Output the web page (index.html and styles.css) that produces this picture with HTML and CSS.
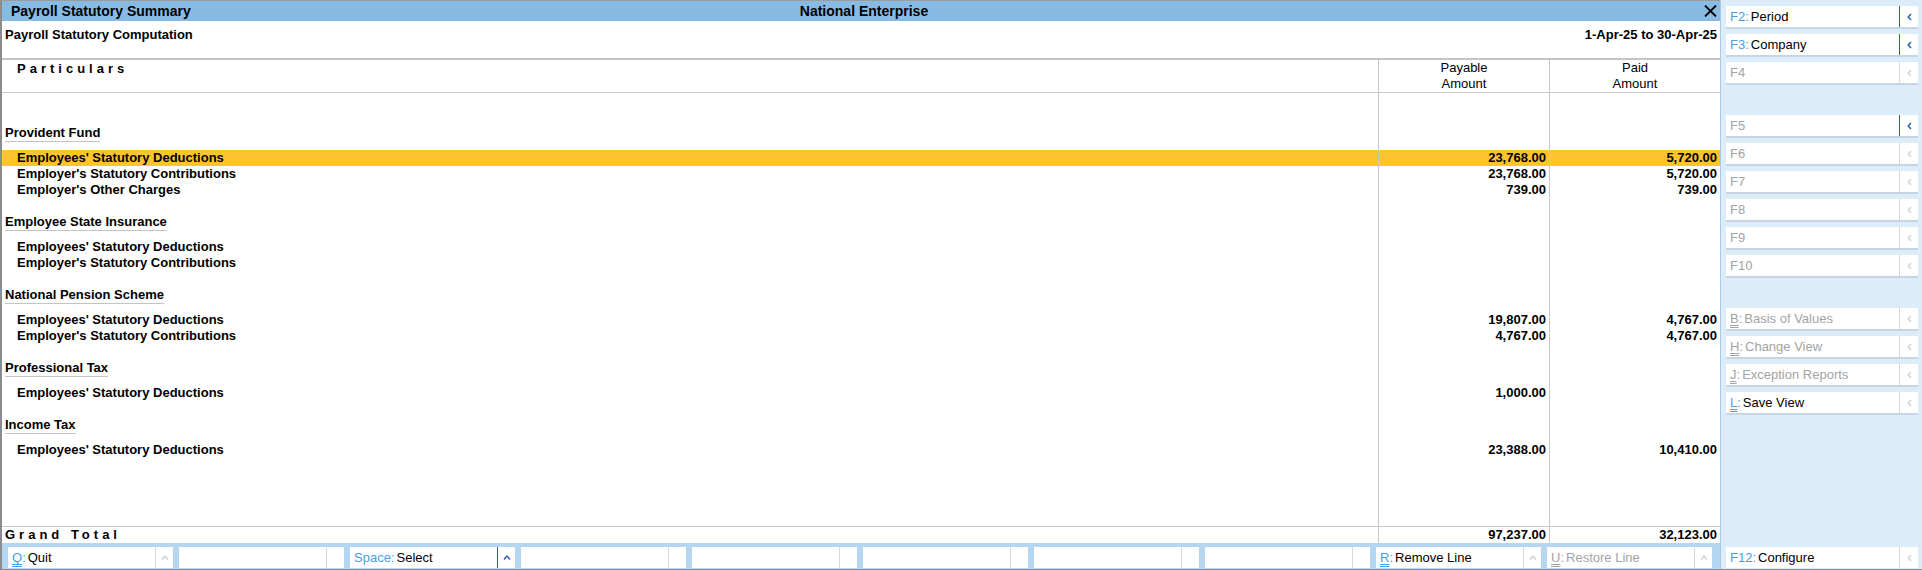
FILE: index.html
```html
<!DOCTYPE html>
<html lang="en">
<head>
    <meta charset="UTF-8">
    <title>Payroll Statutory Summary</title>
    <link rel="stylesheet" href="styles.css">
</head>
<body>

<div class="screen">
    <div class="main">
        <div class="title-bar">
            <span class="title-left">Payroll Statutory Summary</span>
            <span class="title-center">National Enterprise</span>
            <span class="close-btn">
                <svg width="13" height="12" viewBox="0 0 13 12"><path d="M1 0.5 L12 11.5 M12 0.5 L1 11.5" stroke="#000" stroke-width="1.8" fill="none"/></svg>
            </span>
        </div>

        <div class="sub-head">
            <span>Payroll Statutory Computation</span>
            <span>1-Apr-25 to 30-Apr-25</span>
        </div>

        <div class="report">
            <div class="row rep-head">
                <div class="cell particulars">Particulars</div>
                <div class="cell amt amt-head">Payable<br>Amount</div>
                <div class="cell amt amt-head">Paid<br>Amount</div>
            </div>

            <div class="rep-body">
                <div class="group">
                    <div class="group-title"><span>Provident Fund</span></div>
                    <div class="row item selected">
                        <div class="cell name">Employees' Statutory Deductions</div>
                        <div class="cell amt">23,768.00</div>
                        <div class="cell amt">5,720.00</div>
                    </div>
                    <div class="row item">
                        <div class="cell name">Employer's Statutory Contributions</div>
                        <div class="cell amt">23,768.00</div>
                        <div class="cell amt">5,720.00</div>
                    </div>
                    <div class="row item">
                        <div class="cell name">Employer's Other Charges</div>
                        <div class="cell amt">739.00</div>
                        <div class="cell amt">739.00</div>
                    </div>
                </div>

                <div class="group">
                    <div class="group-title"><span>Employee State Insurance</span></div>
                    <div class="row item">
                        <div class="cell name">Employees' Statutory Deductions</div>
                        <div class="cell amt"></div>
                        <div class="cell amt"></div>
                    </div>
                    <div class="row item">
                        <div class="cell name">Employer's Statutory Contributions</div>
                        <div class="cell amt"></div>
                        <div class="cell amt"></div>
                    </div>
                </div>

                <div class="group">
                    <div class="group-title"><span>National Pension Scheme</span></div>
                    <div class="row item">
                        <div class="cell name">Employees' Statutory Deductions</div>
                        <div class="cell amt">19,807.00</div>
                        <div class="cell amt">4,767.00</div>
                    </div>
                    <div class="row item">
                        <div class="cell name">Employer's Statutory Contributions</div>
                        <div class="cell amt">4,767.00</div>
                        <div class="cell amt">4,767.00</div>
                    </div>
                </div>

                <div class="group">
                    <div class="group-title"><span>Professional Tax</span></div>
                    <div class="row item">
                        <div class="cell name">Employees' Statutory Deductions</div>
                        <div class="cell amt">1,000.00</div>
                        <div class="cell amt"></div>
                    </div>
                </div>

                <div class="group">
                    <div class="group-title"><span>Income Tax</span></div>
                    <div class="row item">
                        <div class="cell name">Employees' Statutory Deductions</div>
                        <div class="cell amt">23,388.00</div>
                        <div class="cell amt">10,410.00</div>
                    </div>
                </div>
            </div>

            <div class="row rep-total">
                <div class="cell total-label">Grand Total</div>
                <div class="cell amt">97,237.00</div>
                <div class="cell amt">32,123.00</div>
            </div>
        </div>

        <div class="bottom-bar">
            <div class="key-btn">
                <span class="lbl"><span class="key"><u>Q</u>:</span>Quit</span>
                <span class="arr"><svg width="8" height="5" viewBox="0 0 8 5"><path d="M1 4.5 L4 1 L7 4.5" fill="none" stroke="currentColor" stroke-width="1.2"/></svg></span>
            </div>
            <div class="key-btn">
                <span class="lbl"></span>
                <span class="arr"></span>
            </div>
            <div class="key-btn">
                <span class="lbl"><span class="key">Space:</span>Select</span>
                <span class="arr on"><svg width="8" height="5" viewBox="0 0 8 5"><path d="M1 4.5 L4 1 L7 4.5" fill="none" stroke="currentColor" stroke-width="1.4"/></svg></span>
            </div>
            <div class="key-btn"><span class="lbl"></span><span class="arr"></span></div>
            <div class="key-btn"><span class="lbl"></span><span class="arr"></span></div>
            <div class="key-btn"><span class="lbl"></span><span class="arr"></span></div>
            <div class="key-btn"><span class="lbl"></span><span class="arr"></span></div>
            <div class="key-btn"><span class="lbl"></span><span class="arr"></span></div>
            <div class="key-btn">
                <span class="lbl"><span class="key"><u>R</u>:</span>Remove Line</span>
                <span class="arr"><svg width="8" height="5" viewBox="0 0 8 5"><path d="M1 4.5 L4 1 L7 4.5" fill="none" stroke="currentColor" stroke-width="1.2"/></svg></span>
            </div>
            <div class="key-btn off">
                <span class="lbl"><span class="key"><u>U</u>:</span>Restore Line</span>
                <span class="arr"><svg width="8" height="5" viewBox="0 0 8 5"><path d="M1 4.5 L4 1 L7 4.5" fill="none" stroke="currentColor" stroke-width="1.2"/></svg></span>
            </div>
        </div>
    </div>

    <div class="sidebar">
        <div class="sb-btn">
            <span class="lbl"><span class="key">F2:</span>Period</span>
            <span class="arr on"><svg width="5" height="8" viewBox="0 0 5 8"><path d="M4 1 L1.2 4 L4 7" fill="none" stroke="currentColor" stroke-width="1.5"/></svg></span>
        </div>
        <div class="sb-btn">
            <span class="lbl"><span class="key">F3:</span>Company</span>
            <span class="arr on"><svg width="5" height="8" viewBox="0 0 5 8"><path d="M4 1 L1.2 4 L4 7" fill="none" stroke="currentColor" stroke-width="1.5"/></svg></span>
        </div>
        <div class="sb-btn off">
            <span class="lbl">F4</span>
            <span class="arr"><svg width="5" height="8" viewBox="0 0 5 8"><path d="M4 1 L1.2 4 L4 7" fill="none" stroke="currentColor" stroke-width="1.2"/></svg></span>
        </div>
        <div class="sb-gap"></div>
        <div class="sb-btn off">
            <span class="lbl">F5</span>
            <span class="arr on"><svg width="5" height="8" viewBox="0 0 5 8"><path d="M4 1 L1.2 4 L4 7" fill="none" stroke="currentColor" stroke-width="1.5"/></svg></span>
        </div>
        <div class="sb-btn off">
            <span class="lbl">F6</span>
            <span class="arr"><svg width="5" height="8" viewBox="0 0 5 8"><path d="M4 1 L1.2 4 L4 7" fill="none" stroke="currentColor" stroke-width="1.2"/></svg></span>
        </div>
        <div class="sb-btn off">
            <span class="lbl">F7</span>
            <span class="arr"><svg width="5" height="8" viewBox="0 0 5 8"><path d="M4 1 L1.2 4 L4 7" fill="none" stroke="currentColor" stroke-width="1.2"/></svg></span>
        </div>
        <div class="sb-btn off">
            <span class="lbl">F8</span>
            <span class="arr"><svg width="5" height="8" viewBox="0 0 5 8"><path d="M4 1 L1.2 4 L4 7" fill="none" stroke="currentColor" stroke-width="1.2"/></svg></span>
        </div>
        <div class="sb-btn off">
            <span class="lbl">F9</span>
            <span class="arr"><svg width="5" height="8" viewBox="0 0 5 8"><path d="M4 1 L1.2 4 L4 7" fill="none" stroke="currentColor" stroke-width="1.2"/></svg></span>
        </div>
        <div class="sb-btn off">
            <span class="lbl">F10</span>
            <span class="arr"><svg width="5" height="8" viewBox="0 0 5 8"><path d="M4 1 L1.2 4 L4 7" fill="none" stroke="currentColor" stroke-width="1.2"/></svg></span>
        </div>
        <div class="sb-gap"></div>
        <div class="sb-btn off">
            <span class="lbl"><span class="key"><u>B</u>:</span>Basis of Values</span>
            <span class="arr"><svg width="5" height="8" viewBox="0 0 5 8"><path d="M4 1 L1.2 4 L4 7" fill="none" stroke="currentColor" stroke-width="1.2"/></svg></span>
        </div>
        <div class="sb-btn off">
            <span class="lbl"><span class="key"><u>H</u>:</span>Change View</span>
            <span class="arr"><svg width="5" height="8" viewBox="0 0 5 8"><path d="M4 1 L1.2 4 L4 7" fill="none" stroke="currentColor" stroke-width="1.2"/></svg></span>
        </div>
        <div class="sb-btn off">
            <span class="lbl"><span class="key"><u>J</u>:</span>Exception Reports</span>
            <span class="arr"><svg width="5" height="8" viewBox="0 0 5 8"><path d="M4 1 L1.2 4 L4 7" fill="none" stroke="currentColor" stroke-width="1.2"/></svg></span>
        </div>
        <div class="sb-btn">
            <span class="lbl"><span class="key"><u>L</u>:</span>Save View</span>
            <span class="arr"><svg width="5" height="8" viewBox="0 0 5 8"><path d="M4 1 L1.2 4 L4 7" fill="none" stroke="currentColor" stroke-width="1.2"/></svg></span>
        </div>

        <div class="sb-btn sb-bottom">
            <span class="lbl"><span class="key">F12:</span>Configure</span>
            <span class="arr"><svg width="5" height="8" viewBox="0 0 5 8"><path d="M4 1 L1.2 4 L4 7" fill="none" stroke="currentColor" stroke-width="1.2"/></svg></span>
        </div>
    </div>
</div>

</body>
</html>
```

FILE: styles.css
```css
body {
    margin: 0;
    font-family: "Liberation Sans", Arial, sans-serif;
    font-size: 13px;
    color: #000;
    background: #fff;
}
.screen {
    display: flex;
    width: 1922px;
    height: 570px;
    border-bottom: 1px solid #8a8a8a;
    box-sizing: border-box;
}

/* main report area */
.main {
    width: 1720px;
    display: flex;
    flex-direction: column;
    border-left: 2px solid #8c8c8c;
    border-top: 1px solid #9c9c9c;
    box-sizing: border-box;
}
.title-bar {
    height: 20px;
    background: #88bbe4;
    display: grid;
    grid-template-columns: 1fr auto 1fr;
    align-items: center;
    padding: 0 3px 0 9px;
    font-size: 14px;
    font-weight: bold;
}
.close-btn {
    justify-self: end;
    display: flex;
}
.sub-head {
    height: 39px;
    box-sizing: border-box;
    display: flex;
    justify-content: space-between;
    padding: 6px 3px 0 3px;
    line-height: 16px;
    font-weight: bold;
    border-bottom: 2px solid #c4c4c4;
}
.report {
    flex: 1;
    display: flex;
    flex-direction: column;
    background:
        linear-gradient(#c8c8c8, #c8c8c8) right 341px top / 1px 100% no-repeat,
        linear-gradient(#c8c8c8, #c8c8c8) right 170px top / 1px 100% no-repeat;
}
.row {
    display: grid;
    grid-template-columns: 1fr 171px 171px;
    line-height: 16px;
}
.amt {
    border-left: 1px solid #c8c8c8;
    text-align: right;
    padding-right: 3px;
    font-weight: bold;
}
.rep-head {
    height: 33px;
    box-sizing: border-box;
    border-bottom: 1px solid #c8c8c8;
}
.particulars {
    padding: 1px 0 0 15px;
    font-weight: bold;
    letter-spacing: 4px;
}
.amt-head {
    font-weight: normal;
    text-align: center;
    padding: 0;
}
.rep-body {
    flex: 1;
    padding-top: 32px;
}
.group + .group {
    margin-top: 16px;
}
.group-title {
    display: flex;
    padding-left: 3px;
    margin-bottom: 8px;
    font-weight: bold;
    line-height: 16px;
}
.group-title span {
    border-bottom: 1px solid #c4c4c4;
}
.item .name {
    padding-left: 15px;
    font-weight: bold;
}
.item.selected .cell {
    background: #fec42d;
}
.rep-total {
    height: 17px;
    box-sizing: border-box;
    border-top: 1px solid #c8c8c8;
}
.total-label {
    padding-left: 3px;
    font-weight: bold;
    letter-spacing: 4px;
}

/* key buttons */
.key {
    color: #4a9de0;
    margin-right: 2px;
}
.key u {
    text-decoration: underline double;
    text-underline-offset: 2px;
}
.off .lbl,
.off .key {
    color: #a3a3a3;
}
.arr {
    display: flex;
    align-items: center;
    justify-content: center;
    border-left: 1px solid #d8d8d8;
    color: #cdcdcd;
}
.arr.on {
    border-left-color: #2f5fa6;
    color: #2f5fa6;
}

.bottom-bar {
    height: 26px;
    box-sizing: border-box;
    display: flex;
    gap: 6px;
    padding: 4px 8px 1px 6px;
    background: #b4d6f1;
}
.key-btn {
    flex: 1;
    display: flex;
    height: 21px;
    background: #fff;
}
.key-btn .lbl {
    flex: 1;
    padding-left: 4px;
    line-height: 21px;
    white-space: nowrap;
}
.key-btn .arr {
    width: 17px;
}

/* right side panel */
.sidebar {
    width: 202px;
    box-sizing: border-box;
    display: flex;
    flex-direction: column;
    gap: 5px;
    padding: 6px 4px 1px 5px;
    background: #dcecf9;
    border-left: 1px solid #a9cbe8;
}
.sb-btn {
    display: flex;
    height: 23px;
    box-sizing: border-box;
    background: #fff;
    border-bottom: 2px solid #c6d5e3;
}
.sb-btn .lbl {
    flex: 1;
    padding-left: 4px;
    line-height: 21px;
    white-space: nowrap;
}
.sb-btn .arr {
    width: 18px;
}
.sb-gap {
    height: 20px;
}
.sb-bottom {
    margin-top: auto;
    height: 21px;
    border-bottom: none;
}
```
